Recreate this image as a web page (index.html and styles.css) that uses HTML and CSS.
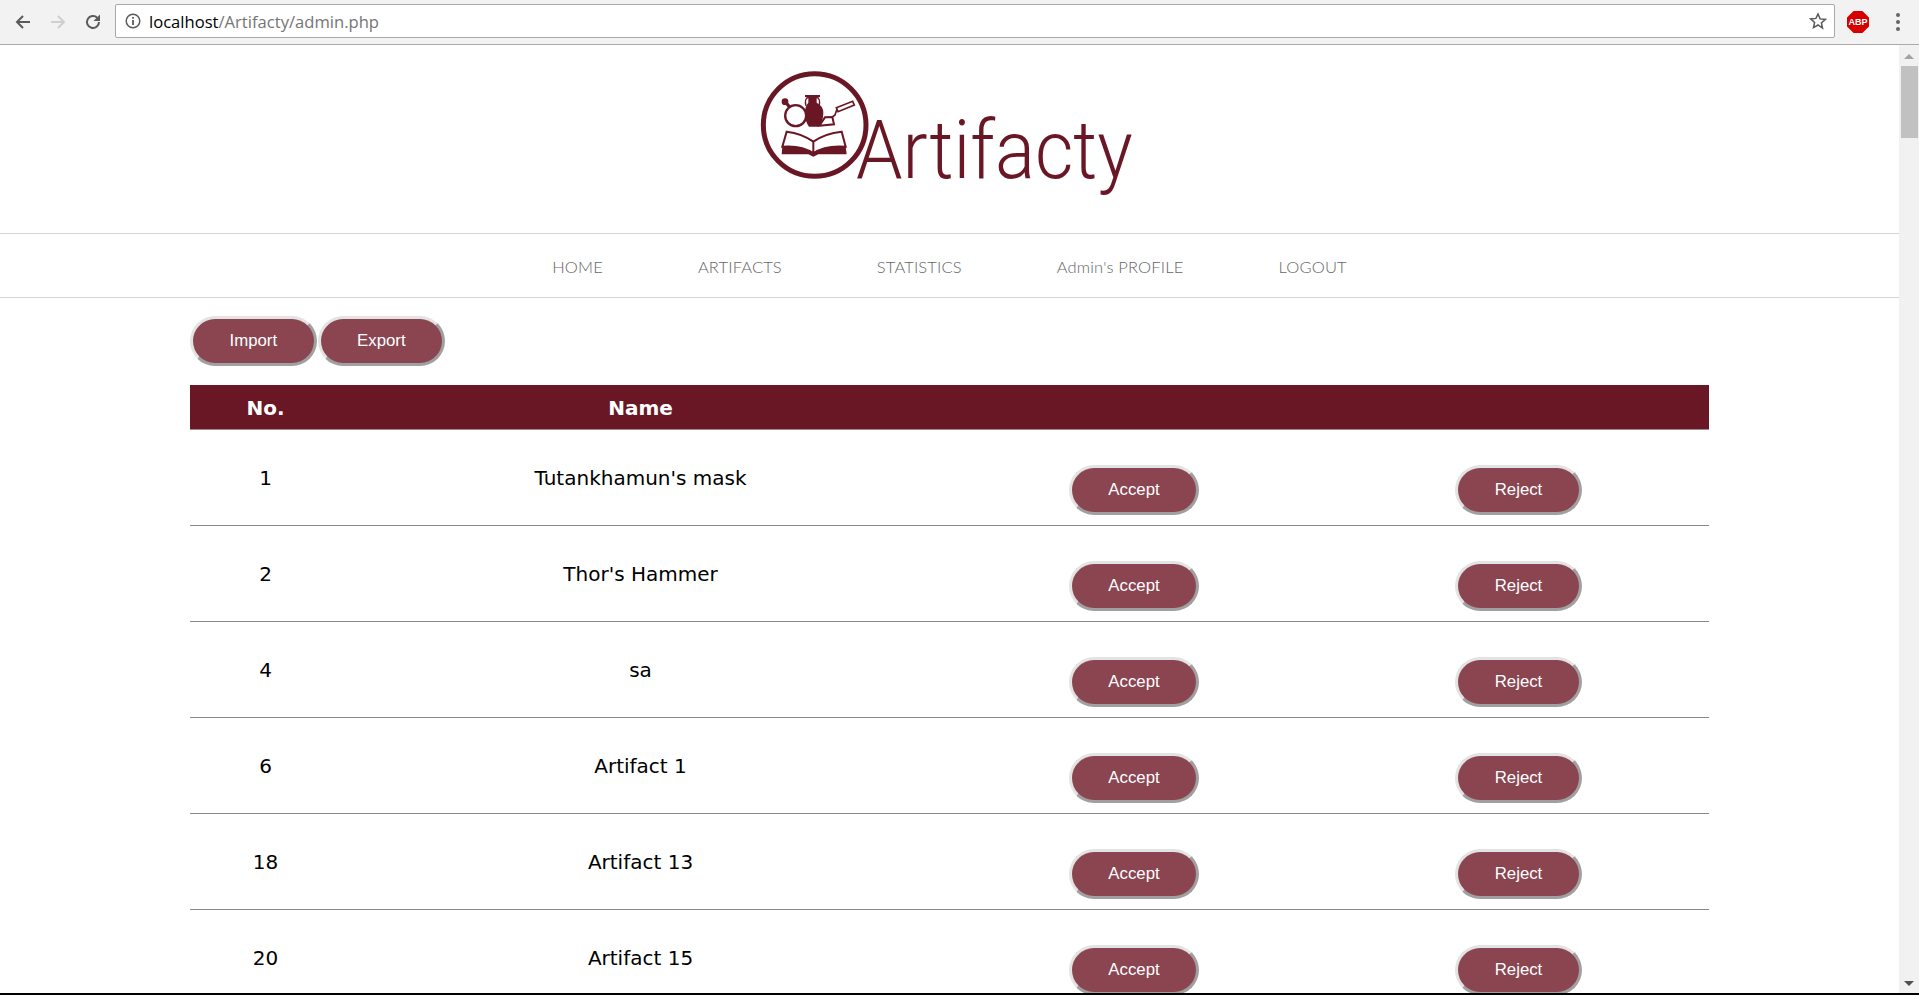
FILE: index.html
```html
<!DOCTYPE html>
<html lang="en">
<head>
  <meta charset="UTF-8" />
  <meta name="viewport" content="width=device-width, initial-scale=1.0"/>
  <title>Artifacty admin</title>
  <link rel="stylesheet" href="styles.css">
</head>
<body>
  <!-- Browser toolbar -->
  <div class="toolbar">
    <svg class="tool-icon" width="18" height="18" viewBox="0 0 18 18"><path d="M16 9H3M9 3L3 9l6 6" fill="none" stroke="#5a5a5a" stroke-width="2"/></svg>
    <svg class="tool-icon" width="18" height="18" viewBox="0 0 18 18"><path d="M2 9h13M9 3l6 6-6 6" fill="none" stroke="#cfcfcf" stroke-width="2"/></svg>
    <svg class="tool-icon" width="18" height="18" viewBox="0 0 18 18"><path d="M15 9a6 6 0 1 1-1.8-4.3" fill="none" stroke="#5a5a5a" stroke-width="2"/><path d="M16 1.500V8H9.500z" fill="#5a5a5a"/></svg>
    <div class="address">
      <svg width="16" height="16" viewBox="0 0 16 16"><circle cx="8" cy="8" r="6.800" fill="none" stroke="#5a5a5a" stroke-width="1.500"/><path d="M7.100 7h1.800v5H7.100zM7.100 4h1.800v1.800H7.100z" fill="#5a5a5a"/></svg>
      <span class="url"><span class="host">localhost</span>/Artifacty/admin.php</span>
      <svg class="star" width="18" height="18" viewBox="0 0 18 18"><path d="M9 2l2.100 4.900 5.200.5-3.900 3.500 1.100 5.200L9 13l-4.500 2.600 1.100-5.200-3.900-3.500 5.200-.5z" fill="none" stroke="#5a5a5a" stroke-width="1.500"/></svg>
    </div>
    <div class="abp">ABP</div>
    <div class="dots"><i></i><i></i><i></i></div>
  </div>

  <div class="window">
    <div class="page">
      <header class="site-head">
        <div class="logo">
          <svg class="logo-mark" width="130" height="120" viewBox="0 0 390 360">
            <g fill="#6a1725">
              <circle cx="194" cy="180" r="154" fill="none" stroke="#6a1725" stroke-width="15"/>
              <!-- magnifying glass -->
              <path d="M105 110l14 16" fill="none" stroke="#6a1725" stroke-width="10"/>
              <circle cx="105" cy="110" r="10"/>
              <circle cx="137" cy="152" r="31.500" fill="#fff" stroke="#6a1725" stroke-width="7"/>
              <!-- vase -->
              <path d="M165 90h45v6l-10 3v14q20 10 20 30q0 26-15 42h-28q-12-16-12-42q0-20 10-30V99l-10-3z"/>
              <path d="M176 97q-14 2-8 26M199 97q14 2 8 26" fill="none" stroke="#6a1725" stroke-width="4"/>
              <!-- trowel -->
              <path d="M208 182l44-4-5-22-22 1z" fill="#fff" stroke="#6a1725" stroke-width="6"/>
              <path d="M247 156l8-6 6-18" fill="none" stroke="#6a1725" stroke-width="5"/>
              <path d="M259 128l49-19 5 11-49 20z" fill="#fff" stroke="#6a1725" stroke-width="5"/>
              <!-- book -->
              <path d="M110 200q45 5 80 30v35q-35-25-93-20zM275 200q-50 5-85 30v35q35-25 97-20z" fill="#fff" stroke="#6a1725" stroke-width="6"/>
              <path d="M97 245q58-5 93 20q35-25 97-20l3 23h-85l-15 7-15-7H95z"/>
            </g>
          </svg>
          <span class="logo-text">Artifacty</span>
        </div>
      </header>

      <nav class="main-nav">
        <a href="#">HOME</a>
        <a href="#">ARTIFACTS</a>
        <a href="#">STATISTICS</a>
        <a href="#">Admin's PROFILE</a>
        <a href="#">LOGOUT</a>
      </nav>

      <div class="content">
        <div class="actions">
          <button class="btn">Import</button>
          <button class="btn">Export</button>
        </div>

        <table class="artifacts">
          <colgroup>
            <col class="col-no"><col class="col-name"><col class="col-act"><col>
          </colgroup>
          <thead>
            <tr><th>No.</th><th>Name</th><th></th><th></th></tr>
          </thead>
          <tbody>
            <tr><td>1</td><td>Tutankhamun's mask</td><td><button class="btn">Accept</button></td><td><button class="btn">Reject</button></td></tr>
            <tr><td>2</td><td>Thor's Hammer</td><td><button class="btn">Accept</button></td><td><button class="btn">Reject</button></td></tr>
            <tr><td>4</td><td>sa</td><td><button class="btn">Accept</button></td><td><button class="btn">Reject</button></td></tr>
            <tr><td>6</td><td>Artifact 1</td><td><button class="btn">Accept</button></td><td><button class="btn">Reject</button></td></tr>
            <tr><td>18</td><td>Artifact 13</td><td><button class="btn">Accept</button></td><td><button class="btn">Reject</button></td></tr>
            <tr><td>20</td><td>Artifact 15</td><td><button class="btn">Accept</button></td><td><button class="btn">Reject</button></td></tr>
          </tbody>
        </table>
      </div>
    </div>

    <!-- Scrollbar -->
    <div class="scrollbar">
      <span class="arrow-up"></span>
      <span class="thumb"></span>
      <span class="arrow-down"></span>
    </div>
  </div>

  <div class="bottom-edge"></div>
</body>
</html>
```

FILE: styles.css
```css
html, body {
  height: 100%;
}

body {
  margin: 0;
  height: 995px;
  display: flex;
  flex-direction: column;
  overflow: hidden;
  background-color: #ffffff;
  font-family: "DejaVu Sans", sans-serif;
}

/* Browser toolbar */
.toolbar {
  flex: none;
  height: 44px;
  display: flex;
  align-items: center;
  padding: 0 19px 0 14px;
  background-color: #f2f2f2;
  border-bottom: 1px solid #ababab;
}

.tool-icon {
  margin-right: 17px;
}

.tool-icon:nth-child(3) {
  margin-right: 13px;
}

.address {
  flex: 1;
  height: 32px;
  margin-bottom: 2px;
  display: flex;
  align-items: center;
  padding: 0 7px 0 9px;
  background-color: #ffffff;
  border: 1px solid #a9a9a9;
  border-radius: 2px;
}

.url {
  margin-left: 8px;
  font-family: "Open Sans", sans-serif;
  font-size: 16.600px;
  color: #757575;
}

.host {
  color: #000000;
}

.star {
  margin-left: auto;
}

.abp {
  width: 22px;
  height: 22px;
  margin: 0 27px 0 12px;
  background-color: #d60000;
  clip-path: polygon(30% 0, 70% 0, 100% 30%, 100% 70%, 70% 100%, 30% 100%, 0 70%, 0 30%);
  color: #ffffff;
  font-family: "Liberation Sans", sans-serif;
  font-size: 9px;
  font-weight: bold;
  line-height: 22px;
  text-align: center;
}

.dots {
  display: flex;
  flex-direction: column;
  gap: 3px;
}

.dots i {
  width: 4px;
  height: 4px;
  border-radius: 50%;
  background-color: #666666;
}

/* Page */
.window {
  flex: 1;
  min-height: 0;
  display: flex;
}

.page {
  flex: 1;
  min-width: 0;
  overflow: hidden;
}

.site-head {
  height: 168px;
  padding-top: 20px;
  display: flex;
  justify-content: center;
}

.logo {
  display: flex;
  width: 399px;
}

.logo-mark {
  flex: none;
}

.logo-text {
  margin: 38px 0 0 -24px;
  transform: scaleX(0.92);
  transform-origin: left top;
  font-family: Roboto, sans-serif;
  font-size: 81px;
  font-weight: 300;
  line-height: 95px;
  color: #6a1725;
}

.main-nav {
  height: 63px;
  display: flex;
  justify-content: center;
  align-items: center;
  gap: 95px;
  border-top: 1px solid #d6d6d6;
  border-bottom: 1px solid #d6d6d6;
}

.main-nav a {
  padding-top: 3px;
  font-family: Lato, sans-serif;
  font-size: 16.500px;
  font-weight: 300;
  letter-spacing: 0.15px;
  color: #666666;
  text-decoration: none;
}

.content {
  padding: 18px 190px 0;
}

.actions {
  display: flex;
  gap: 1px;
  margin-bottom: 19px;
}

.btn {
  height: 50px;
  padding: 0 36.500px;
  background-color: #8a4551;
  border: 3px solid;
  border-color: #e3e3e3 #a0a0a0 #a0a0a0 #e3e3e3;
  border-radius: 25px;
  color: #ffffff;
  font-family: "Liberation Sans", sans-serif;
  font-size: 16.800px;
  cursor: pointer;
}

.artifacts {
  width: 1519px;
  table-layout: fixed;
  border-collapse: separate;
  border-spacing: 0;
  font-size: 20px;
  color: #000000;
}

.col-no {
  width: 151px;
}

.col-name {
  width: 599px;
}

.col-act {
  width: 388px;
}

.artifacts th {
  height: 43px;
  padding: 1px 0 0;
  background-color: #6a1725;
  border-bottom: 1px solid #a58a8f;
  color: #ffffff;
}

.artifacts td {
  padding: 35px 0 10px;
  border-bottom: 1px solid #888888;
  line-height: 26px;
  text-align: center;
  vertical-align: top;
}

.artifacts .btn {
  vertical-align: top;
}

/* Scrollbar */
.scrollbar {
  flex: none;
  width: 20px;
  display: flex;
  flex-direction: column;
  align-items: center;
  background-color: #f1f1f1;
}

.arrow-up {
  margin: 9px 0 7px;
  border: 5px solid transparent;
  border-top: 0;
  border-bottom-color: #a3a3a3;
}

.thumb {
  width: 17px;
  height: 72px;
  background-color: #c1c1c1;
}

.arrow-down {
  margin: auto 0 7px;
  border: 5px solid transparent;
  border-bottom: 0;
  border-top-color: #505050;
}

.bottom-edge {
  flex: none;
  height: 2px;
  background-color: #000000;
}
```
